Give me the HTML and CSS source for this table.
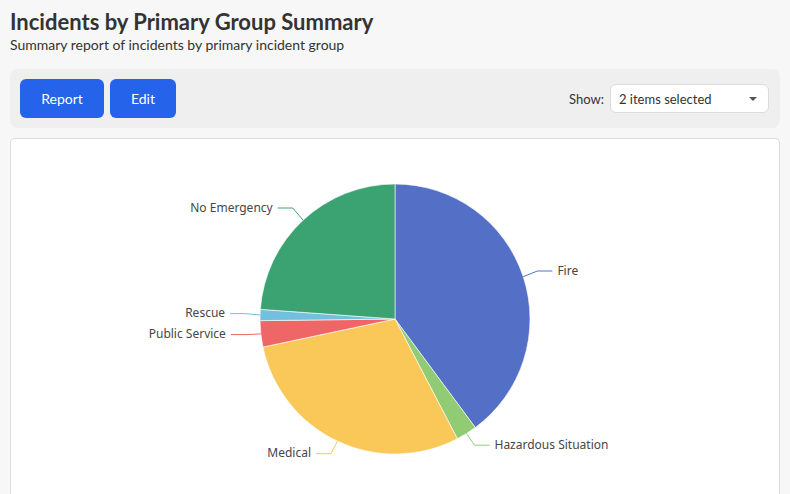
FILE: index.html
```html
<!DOCTYPE html>
<html>
<head>
<meta charset="utf-8">
<link rel="stylesheet" href="styles.css">
</head>
<body>
<div class="page">
  <header class="head">
    <h1 class="title">Incidents by Primary Group Summary</h1>
    <p class="subtitle">Summary report of incidents by primary incident group</p>
  </header>
  <div class="toolbar">
    <div class="btns">
      <button class="btn btn-report">Report</button>
      <button class="btn btn-edit">Edit</button>
    </div>
    <div class="show">
      <span class="show-label">Show:</span>
      <div class="select">
        <span>2 items selected</span>
        <span class="caret"></span>
      </div>
    </div>
  </div>
  <div class="card">
    <svg class="chart" viewBox="11 139 768 355" xmlns="http://www.w3.org/2000/svg">
      <g stroke="#fff" stroke-width="0.6" stroke-linejoin="round">
        <path fill="#5470c6" d="M395 319 L395 184 A135 135 0 0 1 475.30 427.53 Z"/>
        <path fill="#91cc75" d="M395 319 L475.30 427.53 A135 135 0 0 1 457.33 438.75 Z"/>
        <path fill="#fac858" d="M395 319 L457.33 438.75 A135 135 0 0 1 262.95 347.07 Z"/>
        <path fill="#ee6666" d="M395 319 L262.95 347.07 A135 135 0 0 1 260.01 320.65 Z"/>
        <path fill="#73c0de" d="M395 319 L260.01 320.65 A135 135 0 0 1 260.35 309.35 Z"/>
        <path fill="#3ba272" d="M395 319 L260.35 309.35 A135 135 0 0 1 395 184 Z"/>
      </g>
      <g fill="none" stroke-width="1">
        <polyline stroke="#5470c6" points="523.2,276.7 537.4,271 552.4,271"/>
        <polyline stroke="#91cc75" points="466.5,433.5 474.5,445.2 489.5,445.2"/>
        <polyline stroke="#fac858" points="337.4,441.1 331,453.7 316,453.7"/>
        <polyline stroke="#ee6666" points="260.8,333.9 245.9,334.6 230.9,334.6"/>
        <polyline stroke="#73c0de" points="260.1,315 245.1,313.6 230.1,313.6"/>
        <polyline stroke="#3ba272" points="303,220 292.7,208 277.7,208"/>
      </g>
      <g class="labels">
        <text x="557.4" y="270" dominant-baseline="central">Fire</text>
        <text x="494.5" y="444.2" dominant-baseline="central">Hazardous Situation</text>
        <text x="311" y="452.7" text-anchor="end" dominant-baseline="central">Medical</text>
        <text x="225.9" y="333.6" text-anchor="end" dominant-baseline="central">Public Service</text>
        <text x="225.1" y="312.6" text-anchor="end" dominant-baseline="central">Rescue</text>
        <text x="272.7" y="207" text-anchor="end" dominant-baseline="central">No Emergency</text>
      </g>
    </svg>
  </div>
</div>
</body>
</html>
```

FILE: styles.css
```css
html, body {
  margin: 0;
  padding: 0;
  background: #f7f7f7;
  height: 100%;
  overflow: hidden;
}
.page {
  box-sizing: border-box;
  height: 100vh;
  display: flex;
  flex-direction: column;
  padding: 8px 10px 0 10px;
  font-family: Lato, "Liberation Sans", sans-serif;
  color: #333;
}
.title {
  margin: 0;
  font-size: 22px;
  line-height: 28px;
  font-weight: 700;
  color: #333;
}
.subtitle {
  margin: 0;
  font-size: 14px;
  line-height: 18px;
  color: #333;
}
.toolbar {
  flex: none;
  margin-top: 15px;
  height: 59px;
  background: #efefef;
  border-radius: 8px;
  display: flex;
  align-items: center;
  justify-content: space-between;
  padding: 0 11px 0 10px;
}
.btns {
  display: flex;
  gap: 6px;
}
.btn {
  height: 39px;
  border: none;
  border-radius: 6px;
  background: #2563eb;
  color: #fff;
  font-family: Lato, "Liberation Sans", sans-serif;
  font-size: 14px;
  padding: 0;
}
.btn-report { width: 84px; }
.btn-edit { width: 66px; }
.show {
  display: flex;
  align-items: center;
  gap: 6px;
}
.show-label {
  font-size: 13px;
  color: #333;
}
.select {
  height: 27px;
  width: 138px;
  background: #fff;
  border: 1px solid #dcdcdc;
  border-radius: 6px;
  display: flex;
  align-items: center;
  justify-content: space-between;
  padding: 0 11px 0 8px;
  box-sizing: content-box;
  font-size: 13px;
  color: #333;
}
.caret {
  width: 0;
  height: 0;
  border-left: 4px solid transparent;
  border-right: 4px solid transparent;
  border-top: 4px solid #555;
}
.card {
  flex: 1;
  min-height: 0;
  overflow: hidden;
  margin-top: 10px;
  background: #fff;
  border: 1px solid #dcdcdc;
  border-bottom: none;
  border-radius: 5px 5px 0 0;
}
.chart {
  display: block;
  width: 768px;
  height: 355px;
}
.labels text {
  font-family: "Noto Sans", "DejaVu Sans", sans-serif;
  font-size: 12px;
  fill: #464646;
}
```
